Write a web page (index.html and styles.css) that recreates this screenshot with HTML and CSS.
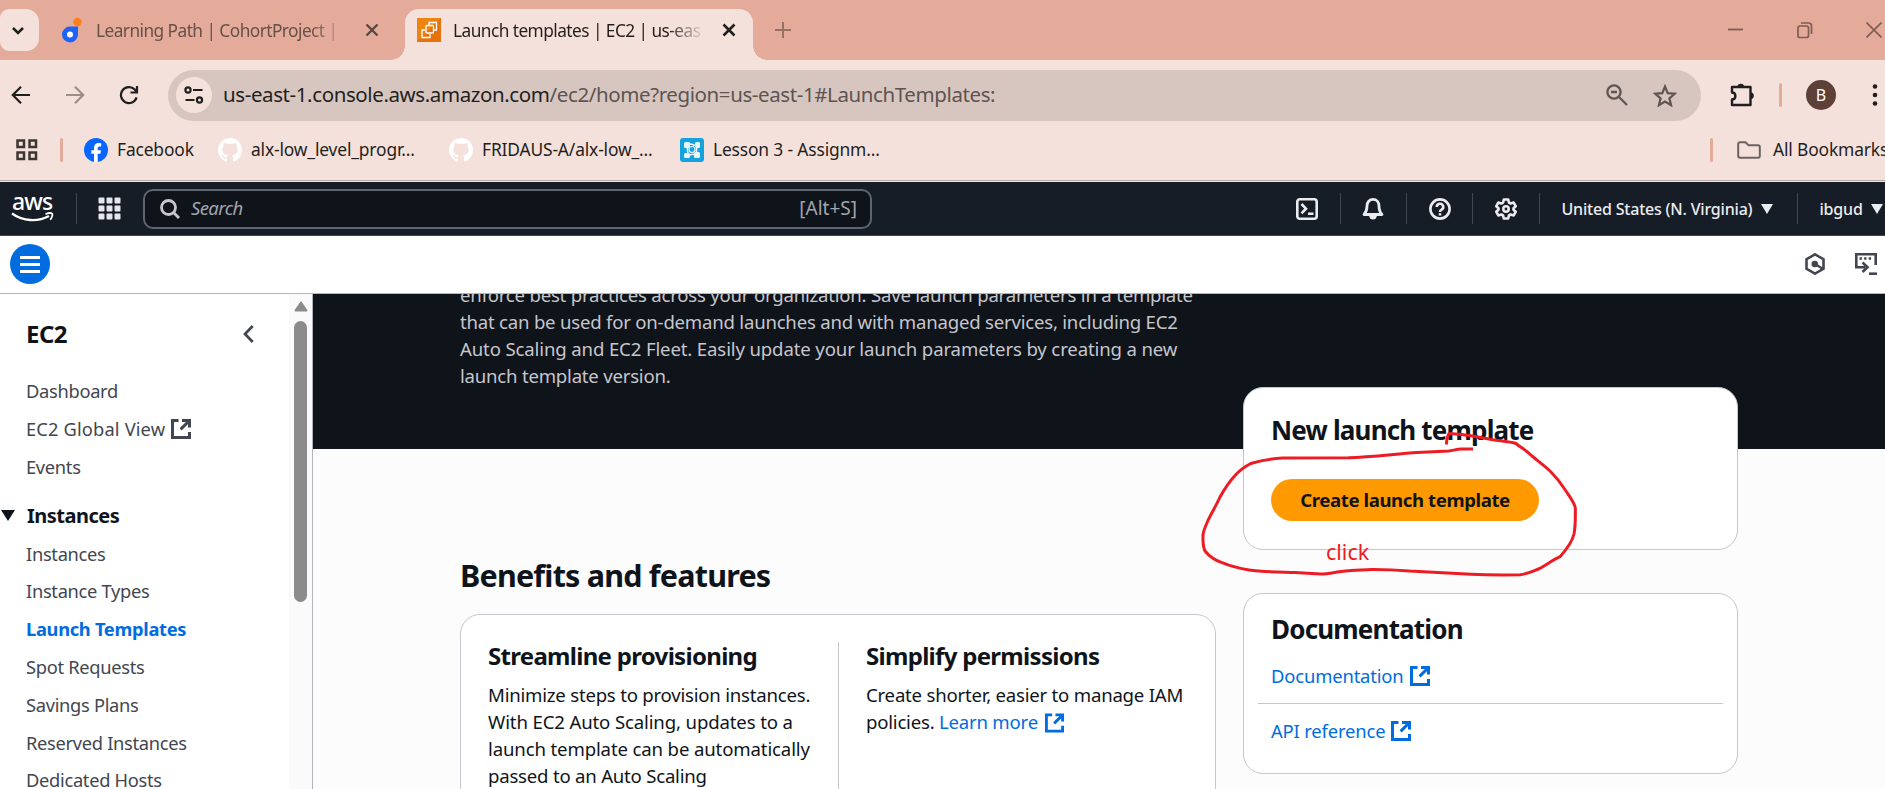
FILE: index.html
```html
<!DOCTYPE html>
<html lang="en">
<head>
<meta charset="utf-8">
<title>Launch templates | EC2 | us-east-1</title>
<link rel="stylesheet" href="styles.css">
</head>
<body>
<svg class="defs" width="0" height="0">
  <defs>
    <symbol id="ext" viewBox="0 0 20 20"><path d="M7.500 1.500H1.500v17h17V13M11 1.500h7.500V8.500M18 2L9.600 10.400" fill="none" stroke="currentColor" stroke-width="3"/></symbol>
    <symbol id="gh" viewBox="0 0 16 16"><path fill="#fff" d="M8 0C3.58 0 0 3.58 0 8c0 3.54 2.29 6.53 5.47 7.59.4.07.55-.17.55-.38 0-.19-.01-.82-.01-1.49-2.01.37-2.53-.49-2.69-.94-.09-.23-.48-.94-.82-1.13-.28-.15-.68-.52-.01-.53.63-.01 1.08.58 1.23.82.72 1.21 1.87.87 2.33.66.07-.52.28-.87.51-1.07-1.78-.2-3.64-.89-3.64-3.95 0-.87.31-1.59.82-2.15-.08-.2-.36-1.02.08-2.12 0 0 .67-.21 2.2.82.64-.18 1.32-.27 2-.27s1.36.09 2 .27c1.53-1.04 2.2-.82 2.2-.82.44 1.1.16 1.92.08 2.12.51.56.82 1.27.82 2.15 0 3.07-1.87 3.75-3.65 3.95.29.25.54.73.54 1.48 0 1.07-.01 1.93-.01 2.2 0 .21.15.46.55.38A8.01 8.01 0 0 0 16 8c0-4.42-3.58-8-8-8z"/></symbol>
  </defs>
</svg>

<div class="tabstrip">
  <div class="tab-search"><svg width="14" height="9" viewBox="0 0 14 9"><path d="M2 2l5 5 5-5" fill="none" stroke="#1f1f1f" stroke-width="2.5"/></svg></div>
  <div class="tab tab-idle">
    <svg width="20" height="26" viewBox="0 0 20 26"><path d="M8 9.500h8V17a8 8 0 1 1-8-7.500z" fill="#1d63f7"/><circle cx="15.500" cy="5" r="4.200" fill="#ff7f1f"/><circle cx="8" cy="17.500" r="3" fill="#fff"/></svg>
    <span class="tab-title">Learning Path | CohortProject |</span>
    <svg class="x" width="14" height="14" viewBox="0 0 14 14"><path d="M1.500 1.500l11 11M12.500 1.500l-11 11" stroke="#574742" stroke-width="2.300"/></svg>
  </div>
  <div class="tab tab-active">
    <svg width="24" height="24" viewBox="0 0 24 24"><rect width="24" height="24" fill="#e5730d"/><path d="M0 0h24L0 24z" fill="#ee8410"/><g fill="none" stroke="#fff" stroke-width="1.300"><rect x="9" y="7.500" width="7.500" height="7.500" rx="1"/><path d="M12 7V4.500h7.500V12H17M8.500 12H5v7.500h8V15.500"/></g></svg>
    <span class="tab-title">Launch templates | EC2 | us-eas</span>
    <svg class="x" width="14" height="14" viewBox="0 0 14 14"><path d="M1.500 1.500l11 11M12.500 1.500l-11 11" stroke="#1f1f1f" stroke-width="2.600"/></svg>
  </div>
  <svg class="newtab" width="16" height="16" viewBox="0 0 16 16"><path d="M8 0v16M0 8h16" stroke="#9a6f64" stroke-width="2"/></svg>
  <div class="winctl">
    <svg width="16" height="16" viewBox="0 0 16 16"><path d="M0 7.500h15" stroke="#7d5d54" stroke-width="1.800"/></svg>
    <svg width="16" height="18" viewBox="0 0 16 18"><rect x="1" y="5" width="10.500" height="11.500" rx="2" fill="none" stroke="#7d5d54" stroke-width="1.700"/><path d="M4 2h7.500q3 0 3 3v8" fill="none" stroke="#7d5d54" stroke-width="1.700"/></svg>
    <svg width="16" height="16" viewBox="0 0 16 16"><path d="M.5 .5l15 15M15.500 .5l-15 15" stroke="#7d5d54" stroke-width="1.600"/></svg>
  </div>
</div>

<div class="toolbar">
  <div class="navs">
    <svg width="20" height="20" viewBox="0 0 20 20"><path d="M19 10H2M10 1.800L1.800 10 10 18.200" fill="none" stroke="#1f1f1f" stroke-width="2.200"/></svg>
    <svg width="20" height="20" viewBox="0 0 20 20"><path d="M1 10h17M10 1.800l8.200 8.200-8.200 8.200" fill="none" stroke="#9b8d89" stroke-width="2.200"/></svg>
    <svg width="20" height="20" viewBox="0 0 20 20"><path d="M17.600 12.400A8 8 0 1 1 15.800 4.600L17.800 7M18 1v6.500h-6.500" fill="none" stroke="#1f1f1f" stroke-width="2.200"/></svg>
  </div>
  <div class="omnibox">
    <div class="siteinfo"><svg width="20" height="18" viewBox="0 0 20 18"><g fill="none" stroke="#1f1f1f" stroke-width="2.200"><circle cx="4" cy="4" r="2.600"/><circle cx="15.500" cy="14" r="2.600"/><path d="M9 4h9.500M1.500 14h9"/></g></svg></div>
    <div class="url">us-east-1.console.aws.amazon.com<span>/ec2/home?region=us-east-1#LaunchTemplates:</span></div>
    <svg class="mag" width="22" height="22" viewBox="0 0 22 22"><g fill="none" stroke="#5f5653" stroke-width="2.300"><circle cx="8" cy="8" r="6.600"/><path d="M13 13l8 8M5 8h6"/></g></svg>
    <svg class="star" width="24" height="23" viewBox="0 0 24 23"><path d="M12 2.500l2.700 6.600 7.100.6-5.400 4.600 1.700 6.900L12 17.500l-6.100 3.700 1.700-6.900-5.400-4.600 7.100-.6z" fill="none" stroke="#5f5653" stroke-width="2.200"/></svg>
  </div>
  <svg class="puzzle" width="26" height="26" viewBox="0 0 26 26"><path d="M3 5h18.500v18H3v-5.500c4.500 0 4.500-7 0-7z" fill="none" stroke="#1f1f1f" stroke-width="2.400" stroke-linejoin="round"/><path d="M8.500 5a3.300 3.300 0 0 1 6.600 0zM21.500 10.500a3.300 3.300 0 0 1 0 6.600z" fill="#1f1f1f"/></svg>
  <i class="vbar"></i>
  <div class="avatar">B</div>
  <svg class="dots" width="6" height="24" viewBox="0 0 6 24"><g fill="#1f1f1f"><circle cx="3" cy="3.500" r="2.300"/><circle cx="3" cy="12" r="2.300"/><circle cx="3" cy="20.500" r="2.300"/></g></svg>
</div>

<div class="bookmarks">
  <svg class="apps" width="22" height="22" viewBox="0 0 22 22"><g fill="none" stroke="#3d3532" stroke-width="2.500"><rect x="1.500" y="1.500" width="6.500" height="6.500"/><rect x="13.500" y="1.500" width="6.500" height="6.500"/><rect x="1.500" y="13.500" width="6.500" height="6.500"/><rect x="13.500" y="13.500" width="6.500" height="6.500"/></g></svg>
  <i class="vbar"></i>
  <div class="bm bm1"><svg width="24" height="24" viewBox="0 0 24 24"><circle cx="12" cy="12" r="12" fill="#0866ff"/><path d="M10 24v-8.300H7.300v-3.500H10V10.500c0-4 2-5.400 4.700-5.400 1 0 1.800.1 2.500.3v3.100h-1.500c-1.600 0-2 .8-2 2v1.700h3.300l-.6 3.500h-2.700V24z" fill="#fff"/></svg><span>Facebook</span></div>
  <div class="bm bm2"><svg width="24" height="24"><use href="#gh"/></svg><span>alx-low_level_progr...</span></div>
  <div class="bm bm3"><svg width="24" height="24"><use href="#gh"/></svg><span>FRIDAUS-A/alx-low_...</span></div>
  <div class="bm"><svg width="24" height="24" viewBox="0 0 24 24"><rect width="24" height="24" rx="3" fill="#14a3dd"/><g fill="#e9f7fd"><rect x="4" y="4" width="6" height="6" rx="1.500"/><rect x="15" y="4" width="5" height="6" rx="1.500"/><rect x="4" y="15" width="6" height="5" rx="1.500"/><rect x="14" y="14" width="6" height="6" rx="1.500"/></g><path d="M7 7l4-1 6 2-1 8-8 1z" fill="none" stroke="#e9f7fd" stroke-width="1.500"/><circle cx="12" cy="11.500" r="3" fill="#14a3dd" stroke="#e9f7fd" stroke-width="1.200"/></svg><span>Lesson 3 - Assignm...</span></div>
  <div class="allbm"><i class="vbar"></i><svg width="24" height="18" viewBox="0 0 24 18"><path d="M1.200 3q0-1.800 1.800-1.800h5.500l3 3H21q1.800 0 1.800 1.800v9q0 1.800-1.800 1.800H3q-1.800 0-1.800-1.800z" fill="none" stroke="#6b6361" stroke-width="2"/></svg><span>All Bookmarks</span></div>
</div>

<header class="aws">
  <div class="logo"><span>aws</span><svg width="43" height="11" viewBox="0 0 43 11"><path d="M1 1.500C12 9.500 27 10 38 4" fill="none" stroke="#fff" stroke-width="2.300"/><path d="M34.500 2.200c3-1.500 6-1.200 6.700-.6.600.7-.2 4-2 6.200" fill="none" stroke="#fff" stroke-width="1.700"/></svg></div>
  <i class="hbar hb1"></i>
  <svg class="grid9" width="23" height="23" viewBox="0 0 23 23"><g fill="#e6e6ee"><rect x="0.500" y="0.500" width="6" height="6" rx="1"/><rect x="8.500" y="0.500" width="6" height="6" rx="1"/><rect x="16.500" y="0.500" width="6" height="6" rx="1"/><rect x="0.500" y="8.500" width="6" height="6" rx="1"/><rect x="8.500" y="8.500" width="6" height="6" rx="1"/><rect x="16.500" y="8.500" width="6" height="6" rx="1"/><rect x="0.500" y="16.500" width="6" height="6" rx="1"/><rect x="8.500" y="16.500" width="6" height="6" rx="1"/><rect x="16.500" y="16.500" width="6" height="6" rx="1"/></g></svg>
  <div class="search"><svg width="20" height="20" viewBox="0 0 20 20"><g fill="none" stroke="#c6c6cd" stroke-width="2.800"><circle cx="8.500" cy="8.500" r="7"/><path d="M13.500 13.500l5.500 5.500"/></g></svg><em>Search</em><span>[Alt+S]</span></div>
  <div class="hright">
    <svg width="22" height="22" viewBox="0 0 22 22"><g fill="none" stroke="#ebebf0" stroke-width="2.600"><rect x="1.300" y="1.300" width="19.400" height="19.400" rx="2.500"/><path d="M5.500 6l4.500 4.700-4.500 4.700M12 15.800h5.500"/></g></svg>
    <i class="hbar"></i>
    <svg width="22" height="22" viewBox="0 0 22 22"><g fill="none" stroke="#ebebf0" stroke-width="2.800" stroke-linejoin="round"><path d="M2 16.500c2.500-2.500 3-4 3-8.500C5 4 7.500 1.400 11 1.400S17 4 17 8c0 4.500.5 6 3 8.500z"/></g><path d="M7 17h8a4 4.500 0 0 1-8 0z" fill="#ebebf0"/></svg>
    <i class="hbar"></i>
    <svg width="22" height="22" viewBox="0 0 22 22"><g fill="none" stroke="#ebebf0" stroke-width="2.600"><circle cx="11" cy="11" r="9.600"/><path d="M7.800 9a3.200 3.200 0 1 1 4.800 2.700c-1 .6-1.600 1-1.600 2.300M11 15.300v2.200"/></g></svg>
    <i class="hbar"></i>
    <svg width="22" height="22" viewBox="0 0 22 22"><g fill="none" stroke="#ebebf0" stroke-width="2.600" stroke-linejoin="round"><path d="M8.800 1.500h4.400l.7 3 1.800 1 3-.9 2 3.600-2.200 2.100v1.400l2.200 2.100-2 3.600-3-.9-1.800 1-.7 3H8.800l-.7-3-1.800-1-3 .9-2-3.600 2.200-2.100v-1.400L1.300 8.200l2-3.600 3 .9 1.800-1z"/><circle cx="11" cy="11" r="2.700"/></g></svg>
    <i class="hbar"></i>
    <span class="region">United States (N. Virginia)</span><b class="tri"></b>
    <i class="hbar"></i>
    <span class="user">ibgud</span><b class="tri"></b>
  </div>
</header>

<div class="subbar">
  <div class="menu"><i></i><i></i><i></i></div>
  <div class="subicons">
    <svg width="20" height="22" viewBox="0 0 20 22"><path d="M10 1.400l8.500 4.800v9.600L10 20.600l-8.500-4.800V6.200z" fill="none" stroke="#424650" stroke-width="2.600"/><circle cx="9.800" cy="11" r="3.300" fill="#424650"/><path d="M10 11l8 5" stroke="#424650" stroke-width="2.200"/></svg>
    <svg width="22" height="22" viewBox="0 0 22 22"><path d="M20.700 12V1.300H1.300v13H10M7.500 9.500l5 4.700-5 4.800" fill="none" stroke="#424650" stroke-width="2.600"/><path d="M14 20.700h8" stroke="#424650" stroke-width="2.600"/><path d="M4.500 5.500h12" stroke="#424650" stroke-width="2.400" stroke-dasharray="2.400 2.200"/></svg>
  </div>
</div>

<div class="body">
  <nav class="side">
    <div class="side-in">
      <div class="side-head"><h2>EC2</h2><svg width="11" height="18" viewBox="0 0 11 18"><path d="M9.700 1L2 9l7.700 8" fill="none" stroke="#424650" stroke-width="2.700"/></svg></div>
      <a>Dashboard</a>
      <a class="gv">EC2 Global View<svg width="20" height="20"><use href="#ext"/></svg></a>
      <a>Events</a>
      <h3><b class="tri dark"></b>Instances</h3>
      <a>Instances</a>
      <a>Instance Types</a>
      <a class="on">Launch Templates</a>
      <a>Spot Requests</a>
      <a>Savings Plans</a>
      <a>Reserved Instances</a>
      <a>Dedicated Hosts</a>
    </div>
    <div class="scroll"><svg width="14" height="11" viewBox="0 0 14 11"><path d="M7 1.500L12.500 9.500h-11z" fill="#8b8b8b" stroke="#8b8b8b" stroke-width="2" stroke-linejoin="round"/></svg><div class="thumb"></div></div>
  </nav>
  <main>
    <section class="hero"><p>enforce best practices across your organization. Save launch parameters in a template<br>that can be used for on-demand launches and with managed services, including EC2<br><span class="wide">Auto Scaling and EC2 Fleet. Easily update your launch parameters by creating a new</span><br>launch template version.</p></section>
    <div class="cols">
      <section class="left">
        <h1>Benefits and features</h1>
        <div class="card features">
          <div class="feat"><h4>Streamline provisioning</h4><p>Minimize steps to provision instances.<br><span class="wide">With EC2 Auto Scaling, updates to a</span><br><span class="wide">launch template can be automatically</span><br>passed to an Auto Scaling</p></div>
          <div class="feat"><h4>Simplify permissions</h4><p>Create shorter, easier to manage IAM<br>policies. <a>Learn more<svg width="19" height="20"><use href="#ext"/></svg></a></p></div>
        </div>
      </section>
      <aside>
        <div class="card new"><h2>New launch template</h2><button>Create launch template</button></div>
        <div class="card docs"><h2>Documentation</h2><a>Documentation<svg width="20" height="20"><use href="#ext"/></svg></a><hr><a>API reference<svg width="20" height="20"><use href="#ext"/></svg></a></div>
      </aside>
    </div>
  </main>
</div>

<svg class="ink" width="400" height="170" viewBox="1190 420 400 170"><path d="M1446.500 444.500C1446.500 440 1447.500 436 1449 433.500C1456 434 1463 434.500 1471 435.800L1493 439.800C1501 441 1510 441.500 1516 443.500C1520 447 1526 450 1532 456C1538 461 1545 466 1550.500 471.500C1556 477 1560 482 1564.600 489C1570 497 1574 502 1575.300 507.500C1575.500 516 1575.500 526 1574 534C1572 543 1566 550 1560 556.700C1553 560 1546 565 1539.700 568.500C1533 571 1527 574 1520 574.800C1503 575 1487 575 1471 574.300L1409.600 571C1397 570 1385 569.500 1373.300 569.500C1361 570 1348 570.500 1337 572C1331 573 1326 574 1320.500 574L1295 572.500C1280 572 1262 572 1249 570C1239 568.500 1230 566 1222 562.700C1214 560 1209 556 1205 551C1202.500 546 1203 540 1203 535C1203.500 530 1206 525 1208.700 519C1212 512 1216 506 1220 497C1225 488 1229 482 1235.500 475C1240 470 1246 466 1250.800 463.500C1260 460.500 1272 458.500 1282.600 458L1348.400 457.800C1372 457 1395 454 1417.300 452.500L1449 451C1453 450.500 1457 449 1461.300 449H1473" fill="none" stroke="#ed1c24" stroke-width="3" stroke-linejoin="round"/></svg>
<div class="note">click</div>
</body>
</html>
```
FILE: styles.css
```css
*{box-sizing:border-box}
body{margin:0;width:1885px;height:789px;overflow:hidden;display:flex;flex-direction:column;background:#fff;font-family:"Noto Sans","Open Sans",sans-serif;position:relative;white-space:nowrap}
svg{display:block;flex:none}
.defs{position:absolute}
h1,h2,h3,h4,p{margin:0}
i,b{display:block;flex:none}

/* browser chrome */
.tabstrip{height:60px;flex:none;background:#e4ab9a;display:flex;align-items:center}
.tab-search{width:39px;height:42px;background:#f5e1db;border-radius:9px 13px 13px 9px;display:flex;align-items:center;justify-content:center;padding-right:3px}
.tab{display:flex;align-items:center;font-size:17.300px;letter-spacing:-.55px}
.tab-idle{width:366px;padding-left:23px;color:#66504a}
.tab-title{line-height:30px;width:250px;margin-left:14px;padding-top:2px;-webkit-mask-image:linear-gradient(90deg,#000 215px,transparent 252px);mask-image:linear-gradient(90deg,#000 215px,transparent 252px)}
.x{margin-left:19px}
.tab-active{width:348px;height:51px;align-self:flex-end;background:#f5e1db;border-radius:14px 14px 0 0;padding:0 0 9px 12px;color:#231f1e;position:relative}
.tab-active .tab-title{margin-left:12px}
.tab-active::before,.tab-active::after{content:"";position:absolute;bottom:0;width:14px;height:14px}
.tab-active::before{left:-14px;background:radial-gradient(circle at 0 0,transparent 13.500px,#f5e1db 14px)}
.tab-active::after{right:-14px;background:radial-gradient(circle at 100% 0,transparent 13.500px,#f5e1db 14px)}
.newtab{margin-left:22px}
.winctl{display:flex;align-items:center;gap:53px;margin:0 3px 0 auto}
.toolbar{height:70px;flex:none;background:#f5e1db;display:flex;align-items:center}
.navs{display:flex;gap:34px;padding-left:11px;width:168px}
.omnibox{width:1533px;height:51px;border-radius:26px;background:#d7c6c0;display:flex;align-items:center;padding-left:8px}
.siteinfo{width:36px;height:36px;border-radius:50%;background:#f5e1db;display:flex;align-items:center;justify-content:center}
.url{font-size:20.500px;letter-spacing:-.4px;margin-left:11px;color:#231f1e;line-height:30px;flex:1;padding-bottom:2px}
.url span{color:#5d5452}
.mag{margin-right:25px}
.star{margin-right:24px}
.puzzle{margin-left:28px}
.vbar{width:3px;height:24px;border-radius:2px;background:#e4ab9a}
.toolbar>.vbar{margin-left:24px}
.avatar{width:30px;height:30px;border-radius:50%;background:#5d4037;color:#fff;font-size:16px;line-height:30px;text-align:center;margin-left:24px}
.dots{margin-left:36px}
.bookmarks{height:52px;flex:none;background:#f5e1db;border-bottom:1px solid #f3e6e2;box-shadow:inset 0 -1px 0 #baa9a4;display:flex;align-items:center;font-size:17.400px;letter-spacing:-.15px;color:#231f1e;padding:0 0 11px 16px}
.bookmarks span{padding-bottom:2px}
.bookmarks>.vbar{margin:0 21px 0 22px}
.bm{display:flex;align-items:center;gap:9px}
.bm1{width:134px}.bm2{width:231px}.bm3{width:231px}
.allbm{display:flex;align-items:center;margin-left:auto;width:175px}
.allbm svg{margin:0 12px 0 24px}

/* console header */
.aws{height:54px;flex:none;background:#161d26;border-bottom:1px solid #424650;display:flex;align-items:center;color:#ebebf0}
.logo{width:43px;margin-left:11px}
.logo span{display:block;font-size:23px;font-weight:500;line-height:16px;letter-spacing:-.8px;color:#fff;padding-left:1px;height:19px;margin-top:-2px}
.hbar{width:1px;height:31px;background:#424650}
.hb1{margin:0 21px 0 22px}
.search{margin-left:22px;width:729px;height:40px;border:2px solid #5f6570;border-radius:10px;background:#0f141a;display:flex;align-items:center;padding:0 13px 0 15px;color:#a4a4ad;font-size:19px}
.search em,.search span{padding-bottom:2px}
.search em{margin-left:11px;flex:1;letter-spacing:-.6px;font-size:18.500px}
.hright{margin-left:auto;width:589px;display:flex;align-items:center;font-weight:500;font-size:16px;letter-spacing:-.2px}
.hright>svg+.hbar{margin:0 21.700px}
.tri{border:6px solid transparent;border-top:10px solid #ebebf0;border-bottom:0}
.region{width:199px}
.hright .tri+.hbar{margin:0 22px 0 24px}
.user{width:51px}
.tri.dark{border-width:7px;border-top-width:11px;border-bottom:0;border-top-color:#0f141a;margin-right:12px}
.subbar{height:58px;flex:none;background:#fff;border-bottom:1px solid #b4b4bb;display:flex;align-items:center;padding:0 8px 1px 10px}
.menu{width:40px;height:40px;border-radius:50%;background:#006ce0;display:flex;flex-direction:column;align-items:center;justify-content:center;gap:4px}
.menu i{width:20px;height:3px;background:#fff}
.subicons{margin-left:auto;display:flex;gap:30px}

/* sidebar */
.body{flex:1;min-height:0;display:flex}
.side{width:313px;border-right:1px solid #b4b4bb;display:flex;overflow:hidden;flex:none}
.side-in{width:289px;padding:24px 0 0 26px}
.side-head{display:flex;justify-content:space-between;align-items:center;padding-right:35px;margin-bottom:22px}
.side h2{font-size:24px;line-height:32px;letter-spacing:-.5px;color:#0f141a}
.side a{display:flex;align-items:center;font-size:18.300px;line-height:37.800px;letter-spacing:-.3px;color:#424650}
.side a.gv{letter-spacing:.15px}
.side a.gv svg{margin-left:6px}
.side a.on{color:#006ce0;font-weight:700}
.side h3{display:flex;align-items:center;font-size:20px;line-height:37.800px;letter-spacing:-.5px;margin:11.500px 0 0 -25px;color:#0f141a}
.scroll{width:23px;background:#fafafa;padding:7px 0 0 5px}
.thumb{width:13px;height:281px;background:#8b8b8b;border-radius:7px;margin-top:9px}

/* content */
main{flex:1;background:#fcfcfd;overflow:hidden}
.hero{height:155px;background:#0f141a;color:#c6c6cd;overflow:hidden;padding-left:147px}
main p{font-size:18.600px;line-height:26.900px;letter-spacing:-.22px}
.wide{letter-spacing:-.14px}
.hero p{margin-top:-12px}
.cols{display:flex;padding-left:147px;gap:27px}
.left{width:756px;padding-top:107px}
h1{font-size:30.500px;line-height:38px;letter-spacing:-.8px;color:#0f141a;margin-bottom:20px}
.card{background:#fff;border:1px solid #c6c6cd;border-radius:20px}
.features{display:flex;padding:27px 0 30px 27px}
.feat{width:350px;color:#0f141a}
.feat+.feat{border-left:1px solid #c6c6cd;padding-left:27px}
h4{font-size:24px;line-height:30px;letter-spacing:-.7px;margin:-1px 0 11px}
.feat a{color:#006ce0}
.feat a svg{display:inline-block;vertical-align:-4px;margin-left:7px}
aside{width:495px;margin-top:-62px}
aside .card{padding:0 27px;color:#0f141a}
aside h2{font-size:26px;line-height:34px;letter-spacing:-.82px}
aside .new{height:163px;padding-top:25px}
.new button{display:block;margin-top:32px;width:268px;height:42px;border:0;border-radius:21px;background:#f90;color:#0f141a;font:700 18.600px "Noto Sans",sans-serif;letter-spacing:-.4px;padding:0 0 2px}
aside .docs{margin-top:43px;height:181px;padding-top:18px}
.docs h2{margin-bottom:16px}
.docs a{display:flex;align-items:center;gap:6px;color:#006ce0;font-size:18.400px;line-height:27px;letter-spacing:-.15px}
.docs hr{margin:14px -13px 13px;border:0;border-top:1px solid #c6c6cd}

/* hand-drawn annotation */
.ink{position:absolute;left:1190px;top:420px}
.note{position:absolute;left:1326px;top:536px;font-size:21.500px;line-height:32px;color:#ed1c24}
```
